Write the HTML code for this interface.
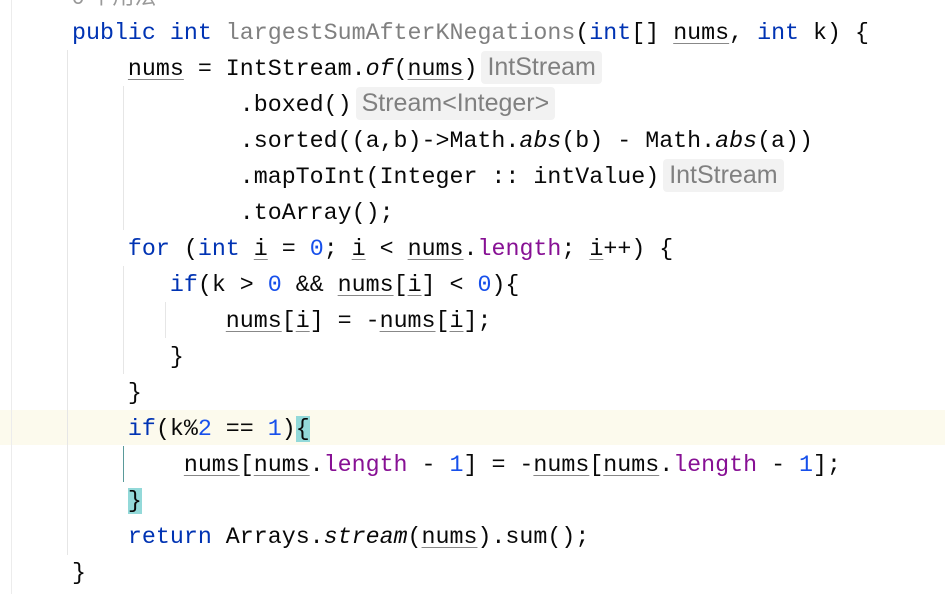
<!DOCTYPE html>
<html><head><meta charset="utf-8"><style>
body{margin:0;width:945px;height:594px;background:#fff;position:relative;overflow:hidden;font-family:"Liberation Mono","DejaVu Sans Mono",monospace;}
.l{position:absolute;left:72px;height:36px;line-height:38px;font-size:23.3px;white-space:pre;color:#080808;}
.k{color:#0033b3}.f{color:#808080}.n{color:#1750eb}.p{color:#871094}.i{font-style:italic}
.u{text-decoration:underline;text-decoration-color:#888;text-underline-offset:4px;text-decoration-thickness:1px}
.h{display:inline-block;background:#f2f2f2;color:#808080;font-family:"Liberation Sans","DejaVu Sans",sans-serif;font-size:25px;line-height:32px;height:33px;padding:0 6px;border-radius:4px;margin-left:4px;vertical-align:top;margin-top:1px}
.g{position:absolute;width:1px;background:#e6e6e6}
.b{background:#93d9d9}
</style></head><body>
<div style="position:absolute;left:0;top:410px;width:945px;height:35px;background:#fcfaed"></div>
<div class="g" style="left:11px;top:0;height:594px;background:#ececec"></div>
<div class="g" style="left:67px;top:50px;height:505px"></div>
<div class="g" style="left:123px;top:86px;height:144px"></div>
<div class="g" style="left:123px;top:266px;height:108px"></div>
<div class="g" style="left:165px;top:302px;height:36px"></div>
<div class="g" style="left:123px;top:446px;height:36px;background:#5a9a9a"></div>
<div class="l" style="top:-22px;left:72px;color:#999;font-family:'Liberation Sans','Noto Sans CJK SC',sans-serif;font-size:22px">0 个用法</div>
<div class="l" style="top:14px"><span class="k">public int </span><span class="f">largestSumAfterKNegations</span>(<span class="k">int</span>[] <span class="u">nums</span>, <span class="k">int</span> k) {</div>
<div class="l" style="top:50px">    <span class="u">nums</span> = IntStream.<span class="i">of</span>(<span class="u">nums</span>)<span class="h">IntStream</span></div>
<div class="l" style="top:86px">            .boxed()<span class="h">Stream&lt;Integer&gt;</span></div>
<div class="l" style="top:122px">            .sorted((a,b)-&gt;Math.<span class="i">abs</span>(b) - Math.<span class="i">abs</span>(a))</div>
<div class="l" style="top:158px">            .mapToInt(Integer :: intValue)<span class="h">IntStream</span></div>
<div class="l" style="top:194px">            .toArray();</div>
<div class="l" style="top:230px">    <span class="k">for</span> (<span class="k">int</span> <span class="u">i</span> = <span class="n">0</span>; <span class="u">i</span> &lt; <span class="u">nums</span>.<span class="p">length</span>; <span class="u">i</span>++) {</div>
<div class="l" style="top:266px">       <span class="k">if</span>(k &gt; <span class="n">0</span> &amp;&amp; <span class="u">nums</span>[<span class="u">i</span>] &lt; <span class="n">0</span>){</div>
<div class="l" style="top:302px">           <span class="u">nums</span>[<span class="u">i</span>] = -<span class="u">nums</span>[<span class="u">i</span>];</div>
<div class="l" style="top:338px">       }</div>
<div class="l" style="top:374px">    }</div>
<div class="l" style="top:410px">    <span class="k">if</span>(k%<span class="n">2</span> == <span class="n">1</span>)<span class="b">{</span></div>
<div class="l" style="top:446px">        <span class="u">nums</span>[<span class="u">nums</span>.<span class="p">length</span> - <span class="n">1</span>] = -<span class="u">nums</span>[<span class="u">nums</span>.<span class="p">length</span> - <span class="n">1</span>];</div>
<div class="l" style="top:482px">    <span class="b">}</span></div>
<div class="l" style="top:518px">    <span class="k">return</span> Arrays.<span class="i">stream</span>(<span class="u">nums</span>).sum();</div>
<div class="l" style="top:554px">}</div>
</body></html>
